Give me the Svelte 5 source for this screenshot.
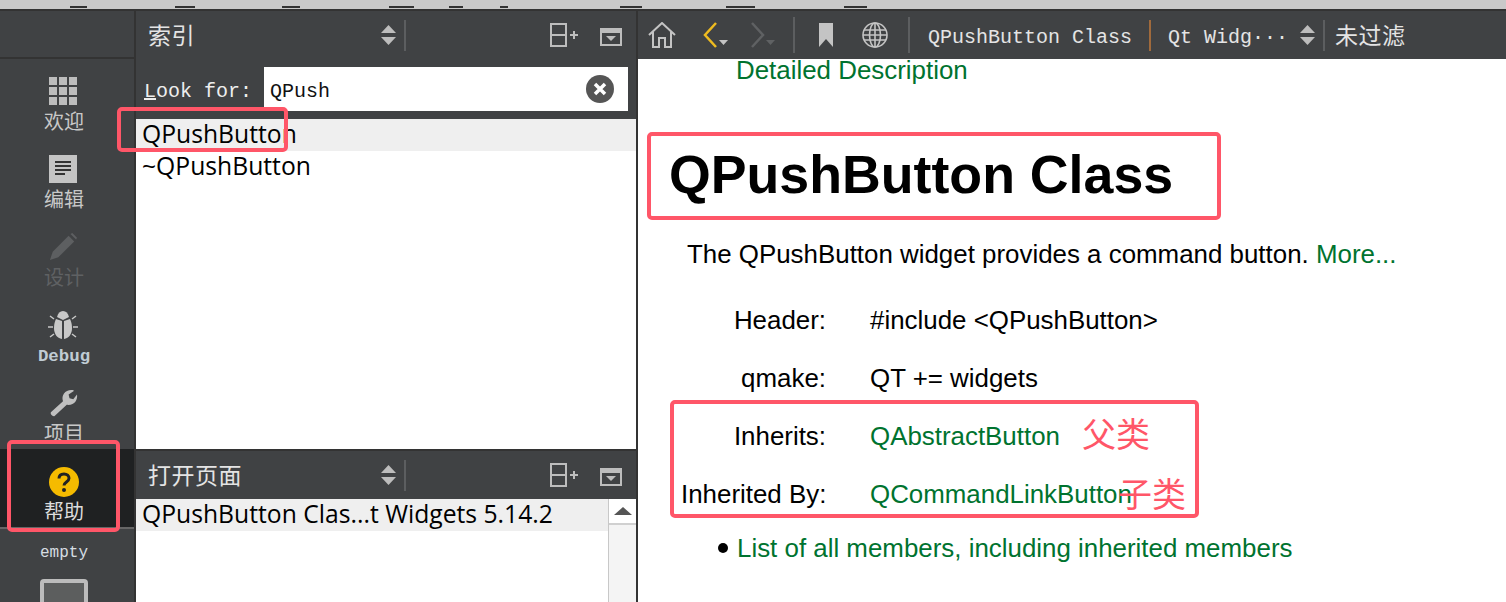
<script>
  const topMarks = [[70, 17], [175, 20], [282, 18], [389, 25], [449, 14], [500, 8], [620, 22], [726, 29], [844, 23]];
  const rows = [
    { label: 'Header:', value: '#include <QPushButton>', link: false },
    { label: 'qmake:', value: 'QT += widgets', link: false },
    { label: 'Inherits:', value: 'QAbstractButton', link: true },
    { label: 'Inherited By:', value: 'QCommandLinkButton', link: true }
  ];
</script>

{#snippet updown()}
  <svg class="updown" width="15" height="22" viewBox="0 0 15 22">
    <path d="M7.500 1 15 9H0z" fill="#bdbdbd" />
    <path d="M0 13H15L7.500 21z" fill="#bdbdbd" />
  </svg>
{/snippet}

{#snippet paneTools()}
  <svg class="split" width="28" height="24" viewBox="0 0 28 24" fill="none" stroke="#bdbdbd" stroke-width="2">
    <rect x="1" y="1" width="15" height="22" />
    <path d="M1 12H16M20 12H28M24 8V16" />
  </svg>
  <svg class="closebox" width="22" height="18" viewBox="0 0 22 18">
    <rect x="1" y="1" width="20" height="16" fill="none" stroke="#bdbdbd" stroke-width="2" />
    <rect x="1" y="1" width="20" height="4" fill="#bdbdbd" />
    <path d="M6 8H16L11 13z" fill="#bdbdbd" />
  </svg>
{/snippet}

<div class="app">
  <svg class="strip" width="1506" height="9">
    {#each topMarks as [x, w]}
      <rect {x} y="6" width={w} height="2" fill="#333" />
    {/each}
  </svg>

  <div class="main">
    <aside class="sidebar">
      <div class="side-top"></div>

      <div class="mode">
        <svg width="28" height="28" viewBox="0 0 28 28" fill="#bdbdbd">
          {#each [0, 10, 20] as y}
            {#each [0, 10, 20] as x}
              <rect {x} {y} width="8" height="8" />
            {/each}
          {/each}
        </svg>
        <span>欢迎</span>
      </div>

      <div class="mode">
        <svg width="28" height="28" viewBox="0 0 28 28">
          <rect width="28" height="28" fill="#c4c4c4" />
          <path d="M6 7H22M6 11H22M6 15H22M6 19H16" stroke="#333" stroke-width="2" />
        </svg>
        <span>编辑</span>
      </div>

      <div class="mode off">
        <svg width="30" height="30" viewBox="0 0 30 30" fill="#5d5f61">
          <path d="M1 29 4 20 21 3 27 9 10 26z" />
          <path d="M23 1 25 0 30 5 29 7z" />
        </svg>
        <span>设计</span>
      </div>

      <div class="mode">
        <svg width="30" height="28" viewBox="0 0 30 28">
          <path d="M9 6C10 2 12 0 15 0s5 2 6 6l-6 3z" fill="#c8c8c8" />
          <path d="M14 10V28C9 27 6 23 6 17c0-4 1-7 2-9z" fill="#c8c8c8" />
          <path d="M16 10V28c5-1 8-5 8-11 0-4-1-7-2-9z" fill="#c8c8c8" />
          <path d="M6 8 2 5M24 8l4-3M5 16H0M25 16h5M6 23l-4 3M24 23l4 3" stroke="#c8c8c8" stroke-width="1.5" />
        </svg>
        <span class="latin">Debug</span>
      </div>

      <div class="mode">
        <svg width="30" height="30" viewBox="0 0 30 30" fill="#c0c0c0">
          <path d="M2 25 15 13C13 7 17 1 24 1c1 0 2 0 3 1l-6 4 1 4 4 1 4-5c1 6-3 12-11 11L6 29c-2 1-5-2-4-4z" />
        </svg>
        <span>项目</span>
      </div>

      <div class="mode active">
        <svg width="30" height="30" viewBox="0 0 30 30">
          <circle cx="15" cy="15" r="15" fill="#f5bb00" />
          <path d="M10 11.500C10 8.500 12 7 15 7s5 1.800 5 4.300c0 3.700-5 3.700-5 7.200" fill="none" stroke="#222" stroke-width="3" />
          <circle cx="15" cy="23" r="2" fill="#222" />
        </svg>
        <span>帮助</span>
      </div>

      <div class="kit">
        <span class="kit-name">empty</span>
        <div class="monitor"></div>
      </div>
    </aside>

    <section class="middle">
      <div class="pane-head">
        <span class="pane-title">索引</span>
        {@render updown()}
        <i class="sep"></i>
        {@render paneTools()}
      </div>

      <div class="search">
        <span class="mono label"><u>L</u>ook for:</span>
        <div class="input">
          <span class="mono dark">QPush</span>
          <svg width="28" height="28" viewBox="0 0 28 28">
            <circle cx="14" cy="14" r="14" fill="#555" />
            <path d="M9 9 19 19M19 9 9 19" stroke="#fff" stroke-width="3.500" />
          </svg>
        </div>
      </div>

      <div class="list index">
        <div class="item current">QPushButton</div>
        <div class="item">~QPushButton</div>
      </div>

      <div class="pane-head second">
        <span class="pane-title">打开页面</span>
        {@render updown()}
        <i class="sep"></i>
        {@render paneTools()}
      </div>

      <div class="open-pages">
        <div class="list">
          <div class="item current">QPushButton Clas...t Widgets 5.14.2</div>
        </div>
        <div class="scrollbar">
          <div class="scroll-btn"><b></b></div>
        </div>
      </div>
    </section>

    <section class="help">
      <div class="toolbar">
        <svg class="home" width="28" height="26" viewBox="0 0 28 26" fill="none" stroke="#c4c4c4" stroke-width="2">
          <path d="M1 13 14 1 27 13M5 10V25H11V16H17V25H23V10" />
        </svg>
        <svg class="nav back" width="26" height="26" viewBox="0 0 26 26">
          <path d="M13 1 2 13 13 25" fill="none" stroke="#eebb20" stroke-width="2.500" />
          <path d="M16 18H25L20.500 23z" fill="#c4c4c4" />
        </svg>
        <svg class="nav" width="26" height="26" viewBox="0 0 26 26">
          <path d="M2 1 13 13 2 25" fill="none" stroke="#5f6163" stroke-width="2.500" />
          <path d="M16 18H25L20.500 23z" fill="#5f6163" />
        </svg>
        <i class="sep tool-sep"></i>
        <svg class="mark" width="14" height="24" viewBox="0 0 14 24"><path d="M0 0H14V24L7 16 0 24z" fill="#c4c4c4" /></svg>
        <svg class="globe" width="26" height="26" viewBox="0 0 26 26" fill="none" stroke="#c4c4c4" stroke-width="1.600">
          <circle cx="13" cy="13" r="12" />
          <ellipse cx="13" cy="13" rx="5.500" ry="12" />
          <path d="M13 1V25M2 8H24M1 13H25M2 18H24" />
        </svg>
        <i class="sep tool-sep2"></i>
        <span class="mono page">QPushButton Class</span>
        <i class="sep accent"></i>
        <span class="mono book">Qt Widg···</span>
        {@render updown()}
        <i class="sep"></i>
        <span class="pane-title filter">未过滤</span>
      </div>

      <div class="doc">
        <a class="detail" href="#top">Detailed Description</a>
        <h1>QPushButton Class</h1>
        <p class="brief">The QPushButton widget provides a command button. <a href="#top">More...</a></p>
        <div class="facts">
          {#each rows as row}
            <span class="key">{row.label}</span>
            <span class:green={row.link}>{row.value}</span>
          {/each}
        </div>
        <div class="member">
          <a href="#top">List of all members, including inherited members</a>
        </div>
      </div>
    </section>
  </div>

  <!-- red annotations drawn over the screenshot -->
  <div class="mark-box b1"></div>
  <div class="mark-box b2"></div>
  <div class="mark-box b3"></div>
  <div class="mark-box b4"></div>
  <span class="note n1">父类</span>
  <span class="note n2">子类</span>
</div>

<style>
  :global(body) {
    margin: 0;
    background: #fff;
  }

  .app {
    position: relative;
    width: 1506px;
    height: 602px;
    overflow: hidden;
    display: flex;
    flex-direction: column;
    font-family: "Noto Sans CJK SC", "Liberation Sans", sans-serif;
  }

  .strip {
    display: block;
    flex: none;
    background: #c9c9c9;
  }

  .main {
    flex: 1;
    min-height: 0;
    display: flex;
    border-top: 2px solid #333;
    background: #333;
    gap: 2px;
  }

  .sidebar {
    width: 134px;
    flex: none;
    background: #404244;
    display: flex;
    flex-direction: column;
  }

  .side-top {
    height: 46px;
    flex: none;
    border-bottom: 2px solid #333;
  }

  .mode {
    height: 78px;
    flex: none;
    display: flex;
    flex-direction: column;
    align-items: center;
    justify-content: flex-start;
    padding: 18px 6px 0 0;
    box-sizing: border-box;
    color: #c8c8c8;
    font-size: 20px;
    line-height: 30px;
  }

  .mode svg {
    display: block;
    margin: 0 3px 1px 0;
    height: 28px;
  }

  .mode span {
    height: 30px;
  }

  .mode.off {
    color: #5f6163;
  }

  .mode .latin {
    font-family: "Liberation Mono", monospace;
    font-size: 17.400px;
    font-weight: 700;
    line-height: 34px;
    color: #c0ccd4;
  }

  .mode.active {
    background: #1f2122;
    color: #dcdcdc;
    border-bottom: 2px solid #666;
    height: 80px;
  }

  .mode.active svg {
    height: 30px;
    margin: 0 1px -1px 0;
  }

  .kit {
    display: flex;
    flex-direction: column;
    align-items: center;
    padding: 12px 6px 0 0;
  }

  .kit-name {
    font-family: "Liberation Mono", monospace;
    font-size: 16px;
    line-height: 24px;
    color: #d6dde2;
  }

  .monitor {
    width: 40px;
    height: 40px;
    margin-top: 14px;
    border: 4px solid #bcbcbc;
    border-radius: 4px;
    background: #5c5e5e;
  }

  .middle {
    width: 500px;
    flex: none;
    display: flex;
    flex-direction: column;
    background: #404244;
  }

  .pane-head {
    height: 48px;
    flex: none;
    display: flex;
    align-items: center;
    padding-left: 12px;
    box-sizing: border-box;
    background: #404244;
    color: #e4e4e4;
  }

  .pane-head.second {
    border-top: 2px solid #333;
    height: 50px;
  }

  .pane-title {
    font-size: 23px;
    line-height: 32px;
    width: 233px;
    margin-top: -2px;
    color: #e4e4e4;
    letter-spacing: 0.500px;
  }

  .sep {
    display: block;
    width: 2px;
    height: 31px;
    margin-left: 8px;
    background: #5c5e60;
    flex: none;
  }

  .split {
    margin-left: 144px;
  }

  .closebox {
    margin-left: 22px;
    margin-top: 4px;
  }

  .search {
    height: 60px;
    flex: none;
    display: flex;
    align-items: flex-start;
    padding: 8px 8px 0;
    box-sizing: border-box;
    color: #eee;
    background: #404244;
  }

  .mono {
    font-family: "Liberation Mono", monospace;
    font-size: 20px;
    line-height: 44px;
    white-space: pre;
  }

  .label {
    width: 108px;
    padding-top: 3px;
  }

  .dark {
    color: #111;
    padding-top: 6px;
  }

  .input {
    width: 364px;
    height: 44px;
    margin-left: 12px;
    padding: 0 14px 0 6px;
    box-sizing: border-box;
    background: #fff;
    display: flex;
    align-items: center;
    justify-content: space-between;
  }

  .list {
    background: #fff;
    font-family: "Open Sans", sans-serif;
    font-size: 24.700px;
    color: #000;
  }

  .list.index {
    height: 330px;
    flex: none;
  }

  .item {
    height: 32px;
    line-height: 30px;
    padding-left: 6px;
    white-space: nowrap;
  }

  .item.current {
    background: #efefef;
  }

  .open-pages {
    flex: 1;
    display: flex;
    background: #fff;
  }

  .open-pages .list {
    flex: 1;
  }

  .scrollbar {
    width: 28px;
    flex: none;
    box-sizing: border-box;
    border-left: 1px solid #c8c8c8;
    background: #f4f4f4;
  }

  .scroll-btn {
    height: 26px;
    box-sizing: border-box;
    border-bottom: 2px solid #d0d0d0;
    background: #fff;
    display: flex;
    align-items: center;
    justify-content: center;
  }

  .scroll-btn b {
    width: 0;
    height: 0;
    border-left: 9px solid transparent;
    border-right: 9px solid transparent;
    border-bottom: 8px solid #555;
  }

  .help {
    flex: 1;
    min-width: 0;
    display: flex;
    flex-direction: column;
    background: #fff;
  }

  .toolbar {
    height: 48px;
    flex: none;
    display: flex;
    align-items: center;
    background: #404244;
    color: #e4e4e4;
  }

  .home {
    margin-left: 10px;
  }

  .nav.back {
    margin-left: 27px;
  }

  .nav {
    margin-left: 21px;
  }

  .tool-sep {
    margin-left: 17px;
    height: 36px;
  }

  .mark {
    margin-left: 24px;
  }

  .globe {
    margin-left: 29px;
  }

  .tool-sep2 {
    margin-left: 20px;
    height: 36px;
  }

  .page {
    margin-left: 18px;
    padding-top: 6px;
  }

  .accent {
    margin-left: 17px;
    background: #a06a3c;
  }

  .book {
    margin-left: 17px;
    width: 132px;
    padding-top: 6px;
  }

  .filter {
    margin-left: 10px;
    width: auto;
  }

  .doc {
    flex: 1;
    font-family: "Liberation Sans", Arial, sans-serif;
    font-size: 25.900px;
    color: #000;
    padding-left: 49px;
  }

  .doc a {
    color: #00732f;
    text-decoration: none;
  }

  .detail {
    display: block;
    margin-left: 49px;
    line-height: 22px;
  }

  h1 {
    margin: 61px 0 0 -18px;
    font-size: 53.700px;
    line-height: 64px;
    font-weight: 700;
  }

  .brief {
    margin: 33px 0 0;
    line-height: 30px;
  }

  .facts {
    display: grid;
    grid-template-columns: 145px auto;
    column-gap: 44px;
    row-gap: 28px;
    margin: 36px 0 0 -6px;
    line-height: 30px;
  }

  .key {
    text-align: right;
    white-space: nowrap;
  }

  .green {
    color: #00732f;
  }

  .member {
    display: flex;
    align-items: center;
    margin: 24px 0 0 31px;
    line-height: 30px;
  }

  .member::before {
    content: "";
    width: 10px;
    height: 10px;
    margin-right: 9px;
    border-radius: 50%;
    background: #000;
  }

  .mark-box {
    position: absolute;
    box-sizing: border-box;
    border: 4px solid #ff5668;
    border-radius: 5px;
  }

  .b1 { left: 117px; top: 107px; width: 171px; height: 45px; }
  .b2 { left: 7px; top: 440px; width: 113px; height: 92px; }
  .b3 { left: 647px; top: 132px; width: 574px; height: 88px; }
  .b4 { left: 670px; top: 400px; width: 529px; height: 118px; }

  .note {
    position: absolute;
    font-size: 34px;
    line-height: 40px;
    color: #ff5668;
  }

  .n1 { left: 1082px; top: 413px; }
  .n2 { left: 1118px; top: 473px; }
</style>
